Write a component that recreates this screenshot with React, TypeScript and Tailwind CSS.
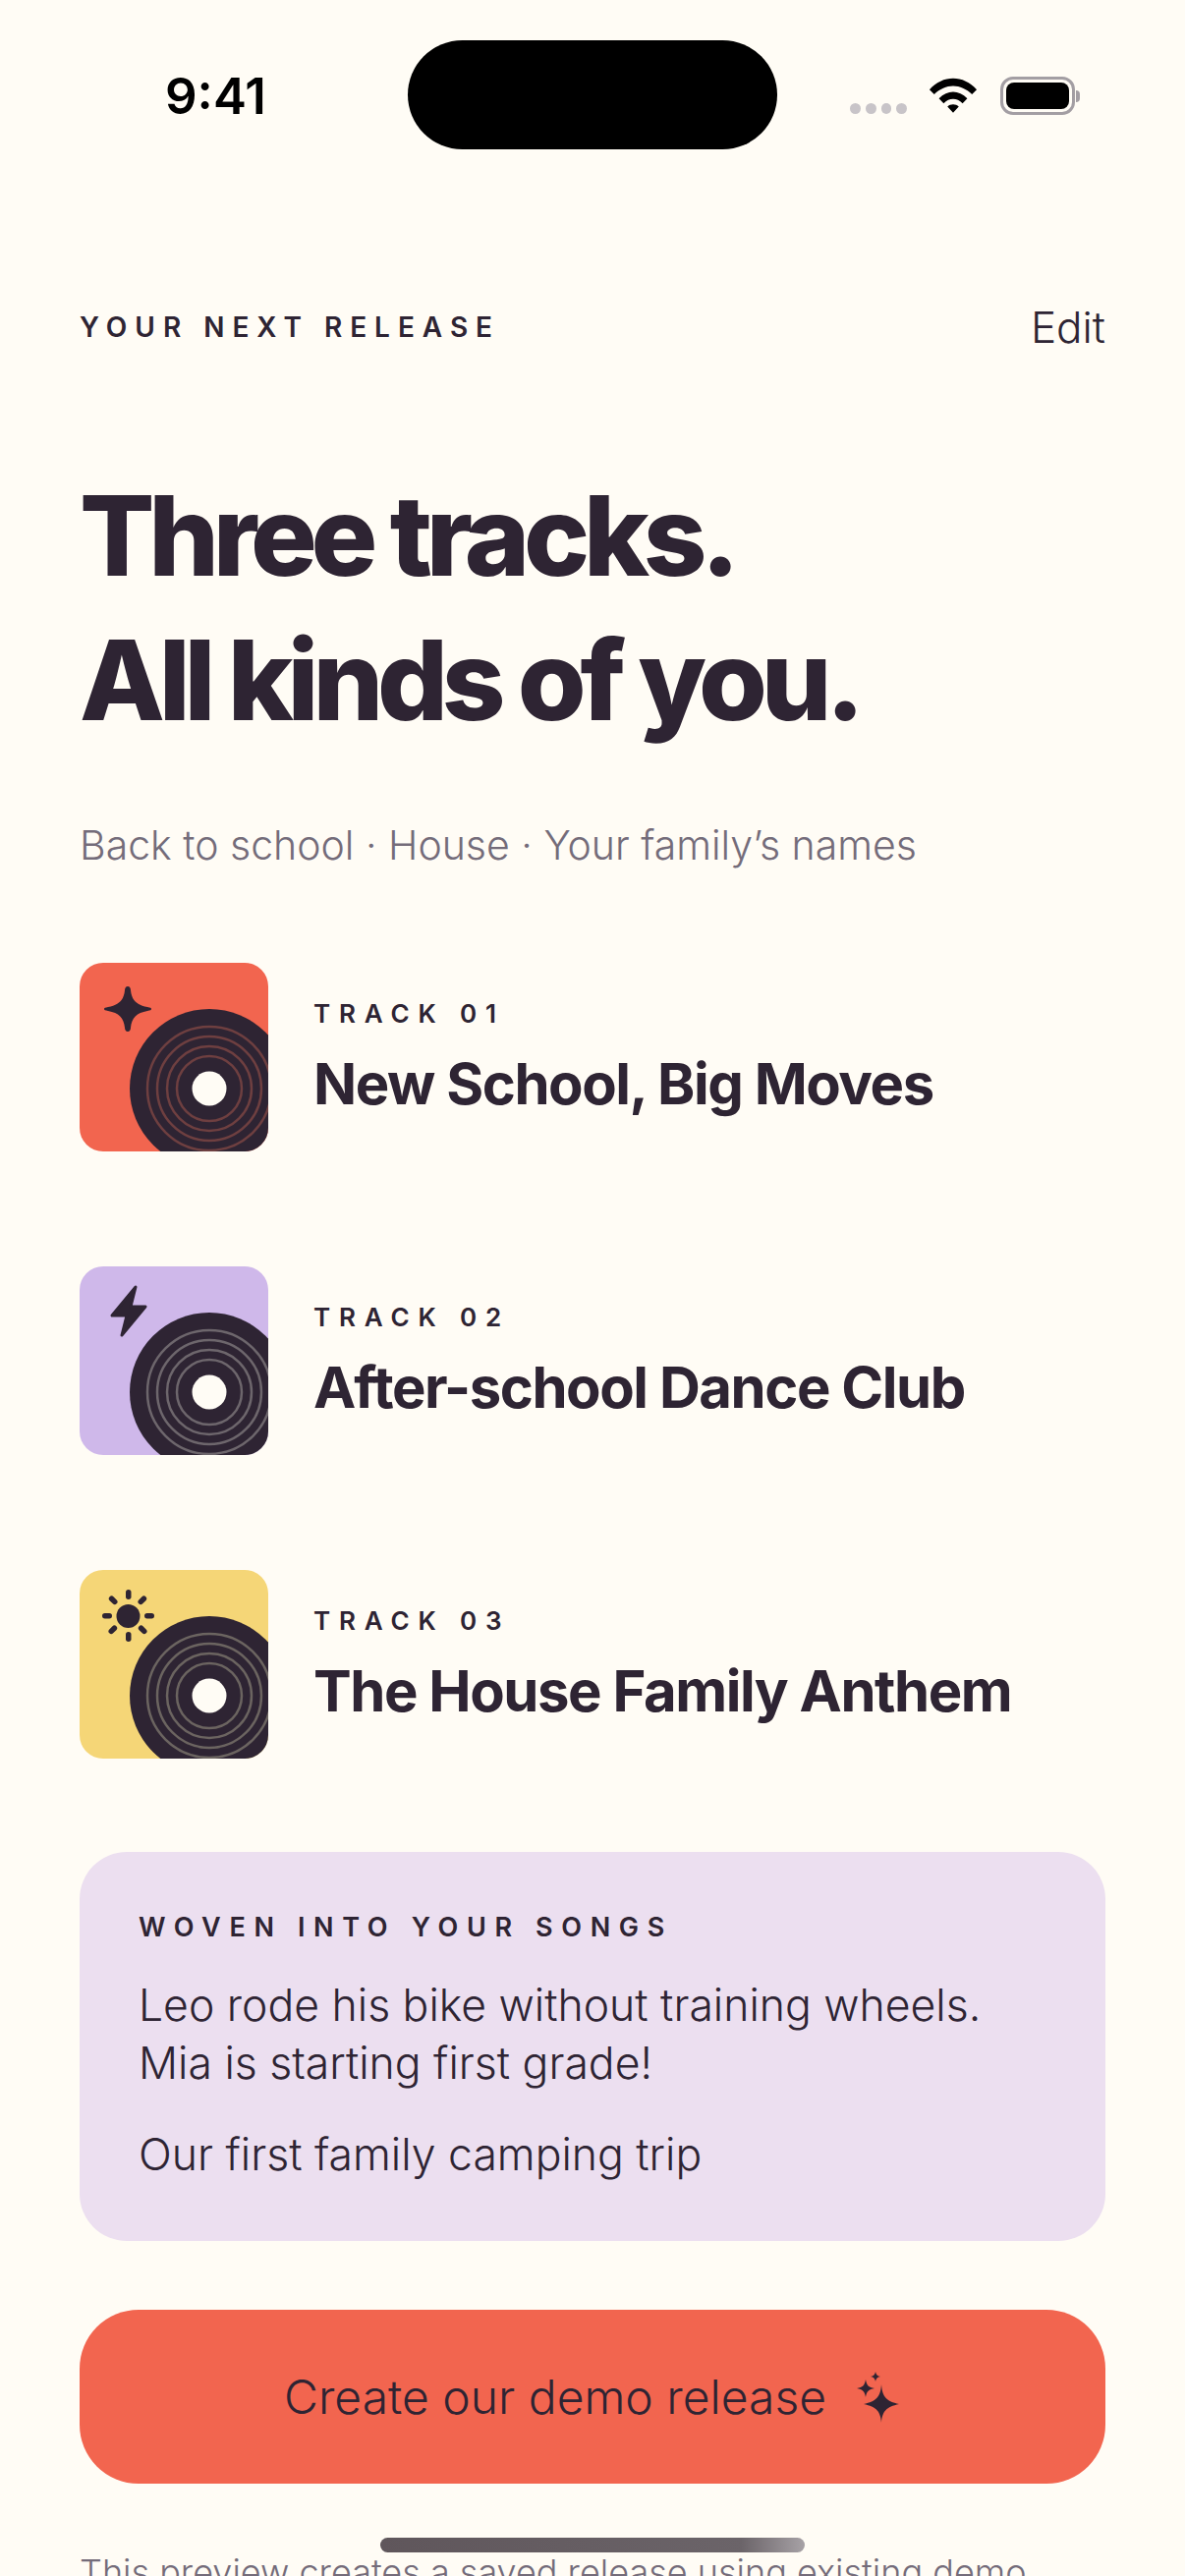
import { type ReactNode } from "react";

const ink = "#2e2433";

const tracks = [
  { id: "01", title: "New School, Big Moves", bg: "bg-[#f2654f]", ring: "#6e3f40", icon: "sparkle" },
  { id: "02", title: "After-school Dance Club", bg: "bg-[#cfb8ea]", ring: "#6d666c", icon: "bolt" },
  { id: "03", title: "The House Family Anthem", bg: "bg-[#f5d677]", ring: "#6b6460", icon: "sun" },
];

const TrackIcon = ({ name }: { name: string }) => {
  if (name === "sparkle") {
    return (
      <path
        d="M49 24 C51 24 52 26 52 28 C53 38 58 43 69 45 C72 45.500 73 46 73 47 C73 48 72 48.500 69 49 C58 51 53 56 52 66 C52 68 51 70 49 70 C47 70 46 68 46 66 C45 56 40 51 29 49 C26 48.500 25 48 25 47 C25 46 26 45.500 29 45 C40 43 45 38 46 28 C46 26 47 24 49 24 Z"
        fill={ink}
      />
    );
  }
  if (name === "bolt") {
    return (
      <path
        d="M57 21 L33 50 L48 50 L43 70 L67 41 L52 41 Z"
        fill={ink}
        stroke={ink}
        strokeWidth="3"
        strokeLinejoin="round"
      />
    );
  }
  return (
    <g fill={ink}>
      <circle cx="49.500" cy="47" r="12" />
      <rect x="47" y="20" width="5.500" height="10" rx="2.750" />
      <rect x="47" y="63" width="5.500" height="10" rx="2.750" />
      <rect x="23" y="44" width="10" height="5.500" rx="2.750" />
      <rect x="66" y="44" width="10" height="5.500" rx="2.750" />
      <rect x="29" y="28" width="10" height="5.500" rx="2.750" transform="rotate(45 34 31)" />
      <rect x="59" y="28" width="10" height="5.500" rx="2.750" transform="rotate(-45 64 31)" />
      <rect x="29" y="58" width="10" height="5.500" rx="2.750" transform="rotate(-45 34 61)" />
      <rect x="59" y="58" width="10" height="5.500" rx="2.750" transform="rotate(45 64 61)" />
    </g>
  );
};

const Cover = ({ bg, ring, icon }: { bg: string; ring: string; icon: string }) => (
  <div className={`h-[192px] w-[192px] shrink-0 overflow-hidden rounded-[24px] ${bg}`}>
    <svg viewBox="0 0 192 192" width="192" height="192">
      <TrackIcon name={icon} />
      <circle cx="132" cy="128" r="81" fill={ink} />
      {[33, 43, 53, 63].map((r) => (
        <circle key={r} cx="132" cy="128" r={r} fill="none" stroke={ring} strokeWidth="2.500" />
      ))}
      <circle cx="132" cy="128" r="17.500" fill="#fffcf5" />
    </svg>
  </div>
);

const Eyebrow = ({ children, className }: { children: ReactNode; className: string }) => (
  <div className={`font-['Inter',sans-serif] font-semibold uppercase text-[#2e2433] ${className}`}>{children}</div>
);

const StatusBar = () => (
  <div className="grid h-[193px] shrink-0 grid-cols-[415px_376px_1fr] pt-[41px]">
    <div className="pt-[36px] pl-[168px] font-['Inter',sans-serif] text-[51px] leading-[42px] font-semibold text-black">
      9:41
    </div>
    <div className="h-[111px] rounded-[56px] bg-black" />
    <div className="flex items-start pt-[37px] pl-[74px]">
      <div className="mt-[27px] flex gap-[5px]">
        {[0, 1, 2, 3].map((i) => (
          <div key={i} className="h-[11px] w-[10.750px] rounded-full bg-[#c8c4c8]" />
        ))}
      </div>
      <svg className="ml-[22px]" width="50" height="38" viewBox="0 0 52 38">
        <path
          d="M1 13 C15 -3 37 -3 51 13 L46 18 C34 6 18 6 6 18 Z M11 22.500 C20 13 32 13 41 22.500 L36 27.500 C30 21.500 22 21.500 16 27.500 Z M20 31 C23 28 29 28 32 31 L26 37.500 Z"
          fill="#000"
        />
      </svg>
      <div className="ml-[23px] flex items-center">
        <div className="h-[39px] w-[76px] rounded-[13px] border-[3px] border-[#a39ea3] p-[3px]">
          <div className="h-full w-full rounded-[8px] bg-black" />
        </div>
        <div className="ml-[1px] h-[12px] w-[4px] rounded-r-full bg-[#a39ea3]" />
      </div>
    </div>
  </div>
);

export default function App() {
  return (
    <div className="relative flex h-[2622px] w-[1206px] flex-col overflow-hidden bg-[#fffcf5] font-['Inter',sans-serif] text-[#2e2433]">
      <StatusBar />
      <div className="flex flex-col px-[81px]">
        <div className="flex items-center justify-between pt-[118px]">
          <Eyebrow className="text-[28px] leading-[44px] tracking-[0.285em]">Your next release</Eyebrow>
          <div className="text-[44px] leading-[44px] font-light">Edit</div>
        </div>
        <h1 className="mt-[117px] text-[113px] leading-[147px] font-extrabold tracking-[-0.055em]">
          Three tracks.
          <br />
          All kinds of you.
        </h1>
        <p className="mt-[66px] text-[41px] leading-[56px] font-light text-[#746c7a]">
          Back to school · House · Your family’s names
        </p>
        <div className="mt-[92px] flex flex-col gap-[117px]">
          {tracks.map((track) => (
            <div key={track.id} className="flex items-center gap-[46px]">
              <Cover bg={track.bg} ring={track.ring} icon={track.icon} />
              <div className="flex flex-col">
                <Eyebrow className="text-[26px] leading-[36px] tracking-[0.34em]">{`Track ${track.id}`}</Eyebrow>
                <div className="mt-[17px] text-[58px] leading-[72px] font-bold tracking-[-0.025em]">
                  {track.title}
                </div>
              </div>
            </div>
          ))}
        </div>
        <div className="mt-[95px] h-[396px] rounded-[48px] bg-[#ecdff0] px-[60px] pt-[59px]">
          <Eyebrow className="text-[27px] leading-[36px] tracking-[0.32em]">Woven into your songs</Eyebrow>
          <div className="mt-[32px] text-[44.500px] leading-[59px] font-light">
            Leo rode his bike without training wheels.
            <br />
            Mia is starting first grade!
          </div>
          <div className="mt-[34px] text-[44.500px] leading-[59px] font-light">Our first family camping trip</div>
        </div>
        <div className="mt-[70px] flex h-[177px] items-center justify-center gap-[28px] rounded-[60px] bg-[#f2654f] text-[48px] font-light">
          Create our demo release
          <svg width="48" height="52" viewBox="0 0 48 52" fill={ink}>
            <path d="M28 13 C29 26 33 30 46 33 C33 36 29 40 28 52 C27 40 23 36 10 33 C23 30 27 26 28 13 Z" />
            <path d="M12 8 C13 14 15 16 21 17 C15 18 13 20 12 26 C11 20 9 18 3 17 C9 16 11 14 12 8 Z" />
            <path d="M22 0 C22.500 3 24 4.500 27 5 C24 5.500 22.500 7 22 10 C21.500 7 20 5.500 17 5 C20 4.500 21.500 3 22 0 Z" />
          </svg>
        </div>
        <p className="mt-[64px] text-[36px] leading-[52px] font-light text-[#746c7a]">
          This preview creates a saved release using existing demo
        </p>
      </div>
      <div className="absolute top-[2583px] left-[387px] h-[15px] w-[432px] rounded-full bg-gradient-to-r from-[#5f565b] via-[#6b6469] via-85% to-[#a7a2a6]" />
    </div>
  );
}
